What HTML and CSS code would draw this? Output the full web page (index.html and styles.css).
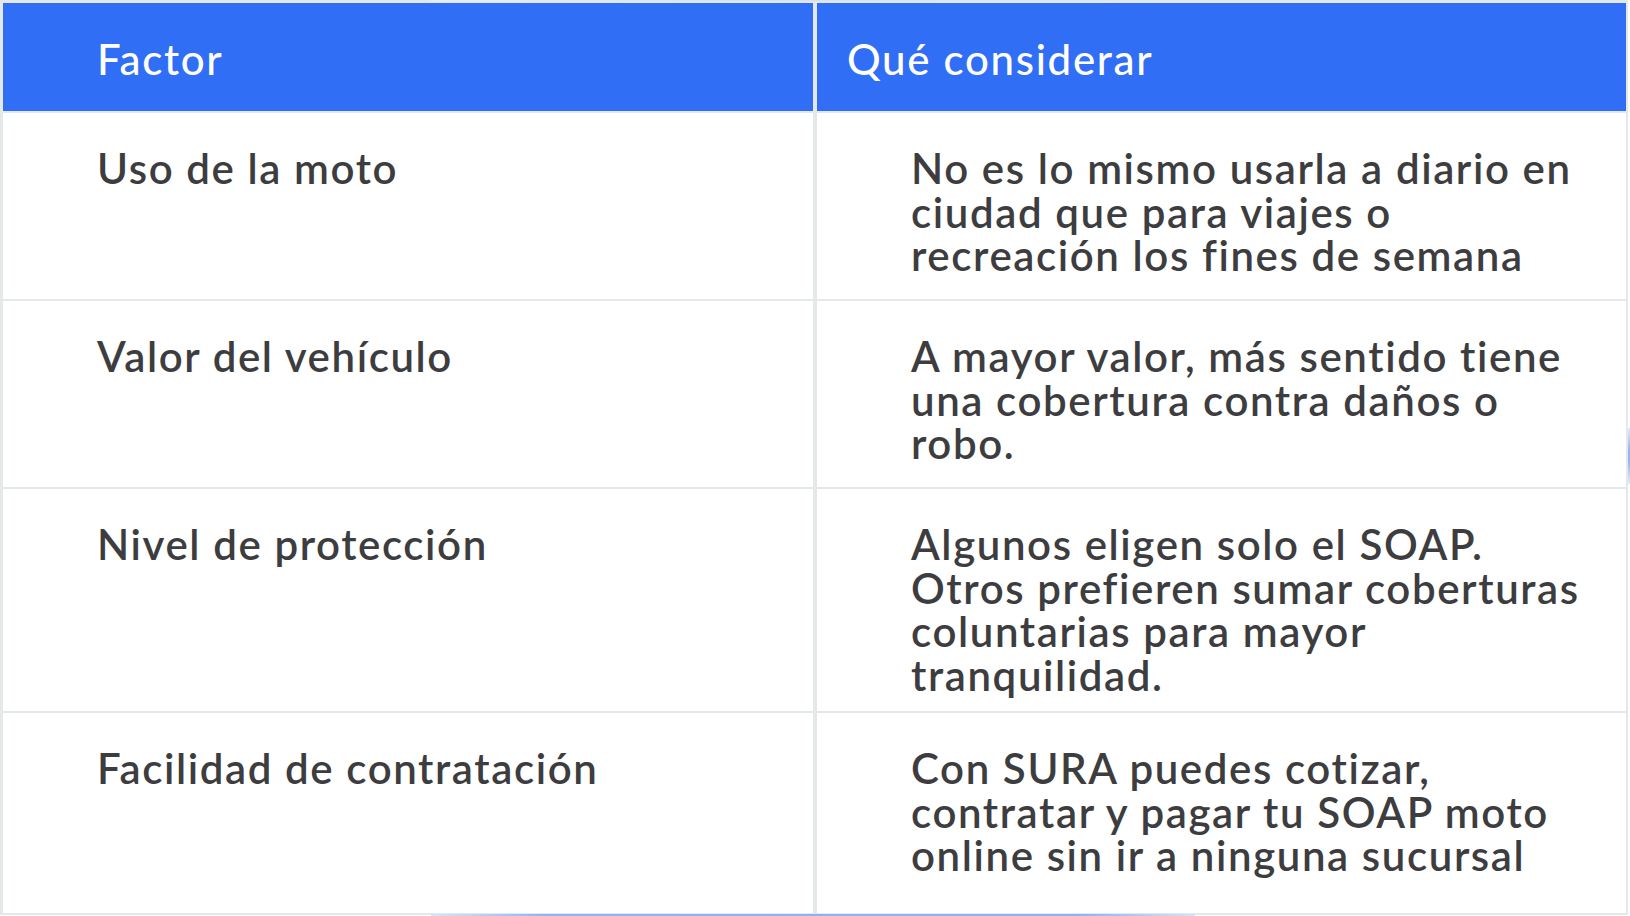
FILE: index.html
```html
<!DOCTYPE html>
<html lang="es">
<head>
<meta charset="utf-8">
<title>Factores SOAP moto</title>
<link rel="stylesheet" href="styles.css">
</head>
<body>
<div class="stage">
  <div class="glow glow-top"></div>
  <div class="glow glow-bottom"></div>
  <div class="glow glow-side"></div>
  <table class="factors">
    <thead>
      <tr>
        <th class="col-a">Factor</th>
        <th class="col-b">Qué considerar</th>
      </tr>
    </thead>
    <tbody>
      <tr class="row-1">
        <td class="col-a">Uso de la moto</td>
        <td class="col-b">No es lo mismo usarla a diario en ciudad que para viajes o recreación los fines de semana</td>
      </tr>
      <tr class="row-2">
        <td class="col-a">Valor del vehículo</td>
        <td class="col-b">A mayor valor, más sentido tiene una cobertura contra daños o robo.</td>
      </tr>
      <tr class="row-3">
        <td class="col-a">Nivel de protección</td>
        <td class="col-b">Algunos eligen solo el SOAP. Otros prefieren sumar coberturas coluntarias para mayor tranquilidad.</td>
      </tr>
      <tr class="row-4">
        <td class="col-a">Facilidad de contratación</td>
        <td class="col-b">Con SURA puedes cotizar, contratar y pagar tu SOAP moto online sin ir a ninguna sucursal</td>
      </tr>
    </tbody>
  </table>
</div>
</body>
</html>
```
FILE: styles.css
```css
html, body {
  margin: 0;
  padding: 0;
  background: #ffffff;
}

body {
  font-family: "Lato", "Noto Sans", sans-serif;
  color: #3d3d3f;
}

.stage {
  position: relative;
  width: 1630px;
  height: 916px;
  overflow: hidden;
}

.factors {
  position: relative;
  z-index: 1;
  width: 1628px;
  border-collapse: separate;
  border-spacing: 0;
  border-top: 3px solid #e4e8e9;
  border-left: 3px solid #e4e8e9;
  border-right: 2px solid #e4e8e9;
  border-bottom: 2px solid #e4e8e9;
  background: #ffffff;
  table-layout: fixed;
}

.factors th,
.factors td {
  box-sizing: border-box;
  vertical-align: top;
  text-align: left;
  font-size: 42px;
  line-height: 43.5px;
  font-weight: 600;
  letter-spacing: 1.6px;
}

.factors th {
  height: 110px;
  padding: 35px 20px 0 94px;
  background: #2f6ef5;
  color: #ffffff;
  border-bottom: 2px solid #e4e8e9;
  font-weight: 500;
  letter-spacing: 1.7px;
}

.factors th.col-b {
  padding-left: 30px;
}

.factors .col-a {
  width: 814px;
  border-right: 4px solid #e4e8e9;
}

.factors td {
  padding: 34px 36px 0 94px;
  border-bottom: 2px solid #e4e8e9;
}

.factors tr:last-child td {
  border-bottom: 0;
}

.row-1 td { height: 188px; }
.row-2 td { height: 188px; }
.row-3 td { height: 224px; }
.row-4 td { height: 200px; }

.glow {
  position: absolute;
  z-index: 2;
  pointer-events: none;
}

.glow-top {
  left: 430px;
  top: 0;
  width: 767px;
  height: 1px;
  background: linear-gradient(90deg, #e8eef8, #d3e1f7 40%, #dde7f7);
}

.glow-bottom {
  left: 431px;
  top: 914px;
  width: 764px;
  height: 2px;
  background: linear-gradient(90deg, #d9e5f8, #8eb3f1 15%, #8db2f0 85%, #d6e3f8);
}

.glow-side {
  left: 1628px;
  top: 428px;
  width: 2px;
  height: 56px;
  background: linear-gradient(180deg, #e4ecf9, #94b6f1 40%, #94b6f1 60%, #e4ecf9);
}
```
